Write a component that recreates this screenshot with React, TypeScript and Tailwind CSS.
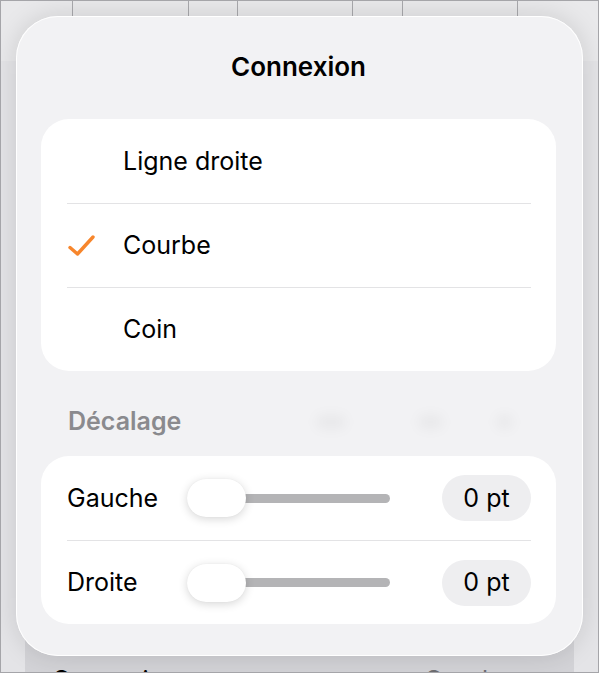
import { ChevronRight } from "lucide-react";

const font = { fontFamily: "Inter, 'Noto Sans', sans-serif" };

const options = [
  { label: "Ligne droite", checked: false },
  { label: "Courbe", checked: true },
  { label: "Coin", checked: false },
];

const offsets = ["Gauche", "Droite"];

function Check() {
  return (
    <svg width="27" height="21" viewBox="0 0 27 21" fill="none" aria-hidden="true" className="ml-[1px]">
      <path
        d="M2 12.5L9.5 19L25 2"
        stroke="#f7862c"
        strokeWidth="3.4"
        strokeLinecap="round"
        strokeLinejoin="round"
      />
    </svg>
  );
}

function Slider() {
  return (
    <div className="relative flex h-[38px] w-[203px] items-center">
      <div className="ml-[14px] h-[9px] flex-1 rounded-full bg-[#b4b4b6]" />
      <div className="absolute left-0 top-0 h-[38px] w-[59px] rounded-full bg-white shadow-[0_2px_10px_rgba(0,0,0,0.16),0_0_1px_rgba(0,0,0,0.08)]" />
    </div>
  );
}

export default function App() {
  return (
    <div
      style={font}
      className="relative flex h-[673px] w-[599px] flex-col overflow-hidden border border-[#a5a5a9] bg-[#e4e4e7] text-black"
    >
      {/* table behind the popover */}
      <div className="flex h-[60px] bg-[#e9e9eb]">
        <div className="w-[71px]" />
        <div className="w-[116px] border-l border-[#a9a9ad]" />
        <div className="w-[49px] border-l border-[#a9a9ad]" />
        <div className="w-[115px] border-l border-[#a9a9ad]" />
        <div className="w-[50px] border-l border-[#a9a9ad]" />
        <div className="w-[115px] border-l border-[#a9a9ad]" />
        <div className="flex-1 border-l border-[#a9a9ad]" />
      </div>
      <div className="flex-1" />
      <div className="mx-[24px] flex h-[60px] items-start bg-[#d3d3d7] pl-[27px] pr-[28px] pt-[56px]">
        <span className="text-[25px] leading-none">Connexion</span>
        <span className="ml-auto text-[25px] leading-none text-[#6e6e72]">Courbe</span>
        <ChevronRight size={26} strokeWidth={2.4} className="ml-[8px] -mt-[1px] text-[#a0a0a4]" />
      </div>

      {/* popover */}
      <div className="absolute left-[15px] top-[15px] flex h-[640px] w-[567px] flex-col rounded-[42px] bg-[#f2f2f4] pl-[25px] shadow-[inset_0_0_0_1px_rgba(255,255,255,0.95),0_0_26px_rgba(0,0,0,0.13)]">
        <div className="flex h-[103px] w-[515px] items-start justify-center pt-[38px]">
          <h1 className="text-[26px] font-semibold leading-none">Connexion</h1>
        </div>

        <ul className="h-[252px] w-[515px] rounded-[28px] bg-white">
          {options.map((o, i) => (
            <li key={o.label} className="h-[84px] pl-[26px] pr-[25px]">
              <div className={`flex h-full items-center ${i > 0 ? "border-t border-[#e3e3e5]" : ""}`}>
                <div className="w-[56px]">{o.checked && <Check />}</div>
                <span className="text-[25px] leading-none">{o.label}</span>
              </div>
            </li>
          ))}
        </ul>

        <div className="flex h-[85px] w-[515px] items-start pl-[27px] pt-[38px]">
          <span className="text-[25px] font-semibold leading-none text-[#8a8a8e]">Décalage</span>
          <div className="ml-[135px] mt-[6px] h-[14px] w-[30px] rounded-full bg-black/[0.04] blur-[6px]" />
          <div className="ml-[72px] mt-[6px] h-[14px] w-[25px] rounded-full bg-black/[0.04] blur-[6px]" />
          <div className="ml-[53px] mt-[6px] h-[14px] w-[17px] rounded-full bg-black/[0.04] blur-[6px]" />
        </div>

        <ul className="h-[168px] w-[515px] rounded-[28px] bg-white">
          {offsets.map((label, i) => (
            <li key={label} className="h-[84px] pl-[26px] pr-[25px]">
              <div className={`flex h-full items-center ${i > 0 ? "border-t border-[#e3e3e5]" : ""}`}>
                <span className="w-[120px] text-[25px] leading-none">{label}</span>
                <Slider />
                <div className="ml-auto flex h-[46px] w-[89px] items-center justify-center rounded-full bg-[#eeeef0] text-[25px] leading-none">
                  0 pt
                </div>
              </div>
            </li>
          ))}
        </ul>
      </div>
    </div>
  );
}
